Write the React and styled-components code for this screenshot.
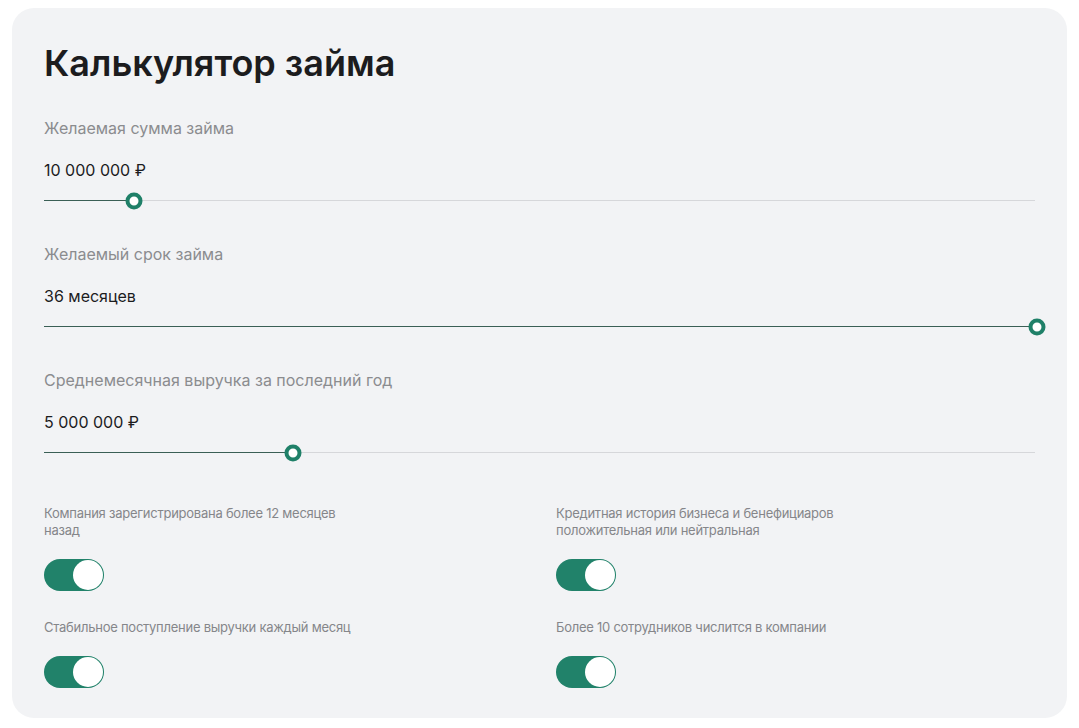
import React, { useState } from 'react';
import styled, { createGlobalStyle } from 'styled-components';

const GlobalStyle = createGlobalStyle`
  body {
    margin: 0;
    background: #ffffff;
    font-family: Inter, "Noto Sans", sans-serif;
  }
`;

const sliders = [
  { label: 'Желаемая сумма займа', value: '10 000 000 ₽', percent: 9.1 },
  { label: 'Желаемый срок займа', value: '36 месяцев', percent: 100.2 },
  { label: 'Среднемесячная выручка за последний год', value: '5 000 000 ₽', percent: 25.1 },
];

const options = [
  'Компания зарегистрирована более 12 месяцев назад',
  'Кредитная история бизнеса и бенефициаров положительная или нейтральная',
  'Стабильное поступление выручки каждый месяц',
  'Более 10 сотрудников числится в компании',
];

function RangeField({ label, value, percent }) {
  return (
    <Field>
      <FieldLabel>{label}</FieldLabel>
      <FieldValue>{value}</FieldValue>
      <Track>
        <Fill style={{ width: `${Math.min(percent, 100)}%` }} />
        <Thumb style={{ left: `${percent}%` }} />
      </Track>
    </Field>
  );
}

function Toggle({ on, onClick }) {
  return (
    <Switch $on={on} onClick={onClick}>
      <Knob $on={on} />
    </Switch>
  );
}

function App() {
  const [checks, setChecks] = useState([true, true, true, true]);

  const flip = (i) => {
    setChecks(prev => prev.map((c, j) => (j === i ? !c : c)));
  };

  return (
    <Page>
      <GlobalStyle />
      <Card>
        <Title>Калькулятор займа</Title>
        {sliders.map(s => (
          <RangeField key={s.label} {...s} />
        ))}
        <Options>
          {options.map((text, i) => (
            <Option key={text}>
              <OptionLabel>{text}</OptionLabel>
              <Toggle on={checks[i]} onClick={() => flip(i)} />
            </Option>
          ))}
        </Options>
      </Card>
    </Page>
  );
}

const Page = styled.div`
  padding: 8px 12px 10px;
`;

const Card = styled.div`
  background: #f2f3f5;
  border-radius: 22px;
  padding: 33px 32px 30px;
  display: flex;
  flex-direction: column;
`;

const Title = styled.h1`
  margin: 0 0 33px;
  font-size: 36px;
  line-height: 44px;
  font-weight: 600;
  color: #1c1c1e;
  letter-spacing: 0;
`;

const Field = styled.div`
  display: flex;
  flex-direction: column;
  margin-bottom: 43px;
`;

const FieldLabel = styled.div`
  font-size: 16px;
  line-height: 20px;
  color: #8b8c8f;
  margin-bottom: 22px;
`;

const FieldValue = styled.div`
  font-size: 16px;
  line-height: 20px;
  color: #1c1c1e;
  margin-bottom: 20px;
`;

const Track = styled.div`
  position: relative;
  height: 1px;
  background: #d6d7da;
`;

const Fill = styled.div`
  height: 1px;
  background: #3a5f55;
`;

const Thumb = styled.div`
  position: absolute;
  top: 0.5px;
  width: 17px;
  height: 17px;
  box-sizing: border-box;
  border: 4px solid #1f8068;
  border-radius: 50%;
  background: #ffffff;
  transform: translate(-50%, -50%);
`;

const Options = styled.div`
  display: grid;
  grid-template-columns: 1fr 1fr;
  column-gap: 33px;
  row-gap: 28px;
  margin-top: 9px;
`;

const Option = styled.div`
  display: flex;
  flex-direction: column;
  align-items: flex-start;
  gap: 20px;
`;

const OptionLabel = styled.div`
  max-width: 312px;
  font-size: 13px;
  line-height: 17px;
  letter-spacing: -0.25px;
  color: #85868a;
`;

const Switch = styled.button`
  width: 60px;
  height: 32px;
  padding: 1px;
  border: none;
  border-radius: 16px;
  background: ${p => (p.$on ? '#21826a' : '#c9cacd')};
  display: flex;
  justify-content: ${p => (p.$on ? 'flex-end' : 'flex-start')};
  cursor: pointer;
`;

const Knob = styled.span`
  width: 30px;
  height: 30px;
  border-radius: 50%;
  background: #ffffff;
`;

export default App;
